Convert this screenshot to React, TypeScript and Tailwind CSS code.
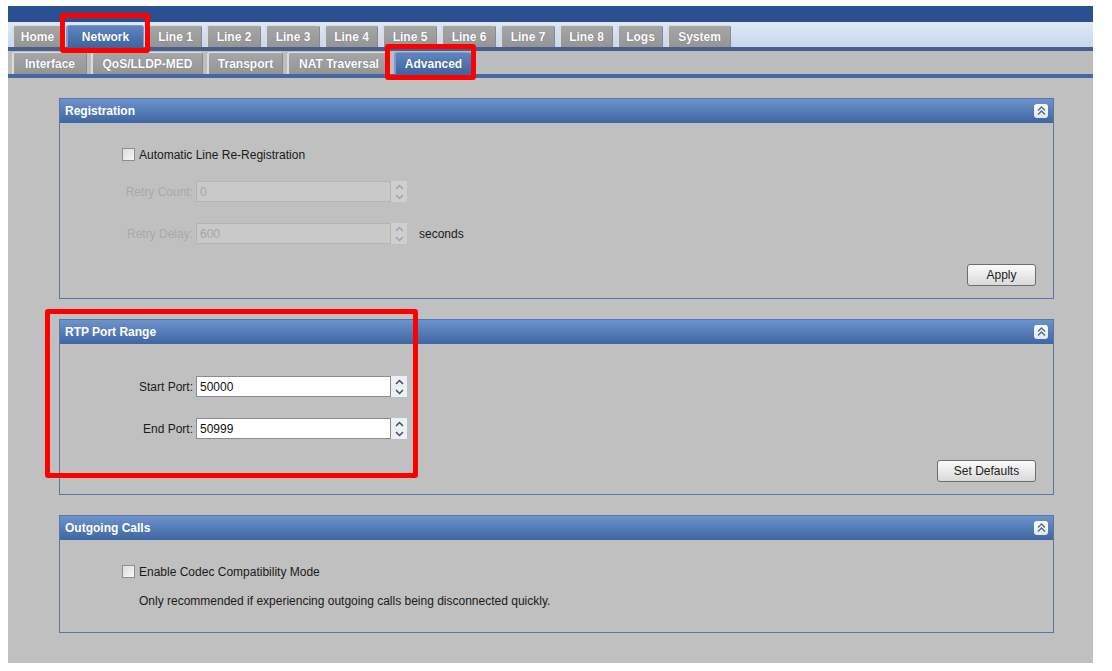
import React from 'react';

const font = { fontFamily: '"Liberation Sans", Arial, sans-serif' };

const topTabs = [
  { label: 'Home', w: 'w-[50px]' },
  { label: 'Network', w: 'w-[78px]', active: true },
  { label: 'Line 1', w: 'w-[54px]' },
  { label: 'Line 2', w: 'w-[55px]' },
  { label: 'Line 3', w: 'w-[55px]' },
  { label: 'Line 4', w: 'w-[54px]' },
  { label: 'Line 5', w: 'w-[55px]' },
  { label: 'Line 6', w: 'w-[55px]' },
  { label: 'Line 7', w: 'w-[55px]' },
  { label: 'Line 8', w: 'w-[54px]' },
  { label: 'Logs', w: 'w-[46px]' },
  { label: 'System', w: 'w-[64px]' },
];

const subTabs = [
  { label: 'Interface', w: 'w-[75px]' },
  { label: 'QoS/LLDP-MED', w: 'w-[112px]' },
  { label: 'Transport', w: 'w-[76px]' },
  { label: 'NAT Traversal', w: 'w-[103px]' },
  { label: 'Advanced', w: 'w-[78px]', active: true },
];

const Tab = ({ label, w, active }: { label: string; w: string; active?: boolean }) => (
  <div
    className={`${w} h-[22px] shrink-0 flex items-center justify-center rounded-t-[3px] border-t border-l-2 border-r text-[12px] font-bold text-white [text-shadow:0_0_1px_rgba(0,0,0,0.35)] ${
      active
        ? 'bg-gradient-to-b from-[#5f86c0] to-[#3f64a0] border-[#7d9ccc]'
        : 'bg-gradient-to-b from-[#a6a6a6] to-[#959595] border-[#dcdcdc] border-r-[#8a8a8a]'
    }`}
  >
    {label}
  </div>
);

const Collapse = () => (
  <div className="w-[14px] h-[14px] rounded-[3px] bg-gradient-to-b from-white to-[#dfe8f5] flex items-center justify-center">
    <svg width="9" height="10" viewBox="0 0 9 10" fill="none" stroke="#4d6a9a" strokeWidth="1.4">
      <path d="M1 4.5 L4.5 1 L8 4.5" />
      <path d="M1 8.5 L4.5 5 L8 8.5" />
    </svg>
  </div>
);

const Panel = ({ title, children }: { title: string; children: React.ReactNode }) => (
  <div className="border border-[#5b76a6] bg-[#c0c0c0]">
    <div className="h-[24px] bg-gradient-to-b from-[#6d93cc] to-[#3f66a2] flex items-center justify-between pl-[5px] pr-[5px]">
      <span className="text-[12px] font-bold text-white">{title}</span>
      <Collapse />
    </div>
    {children}
  </div>
);

const Checkbox = () => (
  <div className="w-[13px] h-[13px] border border-[#8e8e8e] bg-gradient-to-br from-[#dcdcdc] to-[#f7f7f7]" />
);

const Spinner = ({ disabled }: { disabled?: boolean }) => {
  const c = disabled ? '#9aa6b8' : '#3d4f6e';
  return (
    <div className={`w-[16px] h-[21px] flex flex-col justify-between py-[1px] ${disabled ? 'bg-[#cfcfcf]' : 'bg-[#eef0f4]'}`}>
      <div className="h-[9px] flex items-center justify-center">
        <svg width="9" height="6" viewBox="0 0 9 6" fill="none" stroke={c} strokeWidth="1.5">
          <path d="M1 5 L4.5 1.5 L8 5" />
        </svg>
      </div>
      <div className="h-[9px] flex items-center justify-center">
        <svg width="9" height="6" viewBox="0 0 9 6" fill="none" stroke={c} strokeWidth="1.5">
          <path d="M1 1 L4.5 4.5 L8 1" />
        </svg>
      </div>
    </div>
  );
};

const Field = ({ label, value, disabled, suffix }: { label: string; value: string; disabled?: boolean; suffix?: string }) => (
  <div className="flex items-center h-[21px]">
    <div className={`w-[136px] pr-[3px] text-right text-[12px] ${disabled ? 'text-[#a9a9a9]' : 'text-[#1a1a1a]'}`}>
      {label}
    </div>
    <div
      className={`w-[195px] h-[21px] border flex items-center pl-[3px] text-[12px] ${
        disabled ? 'bg-[#c9c9c9] border-[#b4b4b4] text-[#a6a6a6]' : 'bg-white border-[#8c8c8c] text-[#111]'
      }`}
    >
      {value}
    </div>
    <Spinner disabled={disabled} />
    {suffix && <span className="ml-[12px] text-[12px] text-[#1a1a1a]">{suffix}</span>}
  </div>
);

const Button = ({ label, w }: { label: string; w: string }) => (
  <div className={`${w} h-[22px] rounded-[3px] border border-[#6e6e6e] bg-gradient-to-b from-[#fbfbfb] to-[#d9d9d9] flex items-center justify-center text-[12px] text-[#222]`}>
    {label}
  </div>
);

export default function App() {
  return (
    <div className="min-h-[671px] bg-white pt-[6px] pl-[8px]" style={font}>
      <div className="relative w-[1085px]">
        <div className="h-[16px] bg-[#2b4f8f]" />
        <div className="h-[25px] bg-gradient-to-b from-[#e0e8f5] to-[#c8d7ee] flex items-end gap-[4px] pl-[4px]">
          {topTabs.map((t) => (
            <Tab key={t.label} {...t} />
          ))}
        </div>
        <div className="h-[4px] bg-[#4a5f8f]" />
        <div className="h-[23px] bg-[#bdbdbd] flex items-end gap-[4px] pl-[4px]">
          {subTabs.map((t) => (
            <Tab key={t.label} {...t} />
          ))}
        </div>
        <div className="h-[4px] bg-[#4767a0]" />

        <div className="bg-[#c0c0c0] pt-[20px] pb-[30px] pl-[51px] pr-[39px] flex flex-col gap-[20px]">
          <Panel title="Registration">
            <div className="pt-[25px] pb-[12px] flex flex-col">
              <div className="flex items-center gap-[4px] ml-[62px] h-[13px]">
                <Checkbox />
                <span className="text-[12px] text-[#1a1a1a]">Automatic Line Re-Registration</span>
              </div>
              <div className="mt-[20px]">
                <Field label="Retry Count:" value="0" disabled />
              </div>
              <div className="mt-[21px]">
                <Field label="Retry Delay:" value="600" disabled suffix="seconds" />
              </div>
              <div className="mt-[20px] flex justify-end pr-[17px]">
                <Button label="Apply" w="w-[69px]" />
              </div>
            </div>
          </Panel>

          <Panel title="RTP Port Range">
            <div className="pt-[32px] pb-[12px] flex flex-col">
              <Field label="Start Port:" value="50000" />
              <div className="mt-[21px]">
                <Field label="End Port:" value="50999" />
              </div>
              <div className="mt-[21px] flex justify-end pr-[17px]">
                <Button label="Set Defaults" w="w-[99px]" />
              </div>
            </div>
          </Panel>

          <Panel title="Outgoing Calls">
            <div className="pt-[25px] pb-[24px] flex flex-col">
              <div className="flex items-center gap-[4px] ml-[62px] h-[13px]">
                <Checkbox />
                <span className="text-[12px] text-[#1a1a1a]">Enable Codec Compatibility Mode</span>
              </div>
              <div className="mt-[16px] ml-[79px] text-[12px] text-[#1a1a1a] leading-[14px]">
                Only recommended if experiencing outgoing calls being disconnected quickly.
              </div>
            </div>
          </Panel>
        </div>

        <div className="absolute left-[52px] top-[7px] w-[90px] h-[40px] border-[5px] border-[#ff0000] rounded-[3px]" />
        <div className="absolute left-[377px] top-[38px] w-[91px] h-[36px] border-[5px] border-[#ff0000] rounded-[3px]" />
        <div className="absolute left-[37px] top-[303px] w-[373px] h-[169px] border-[5px] border-[#ff0000] rounded-[3px]" />
      </div>
    </div>
  );
}
